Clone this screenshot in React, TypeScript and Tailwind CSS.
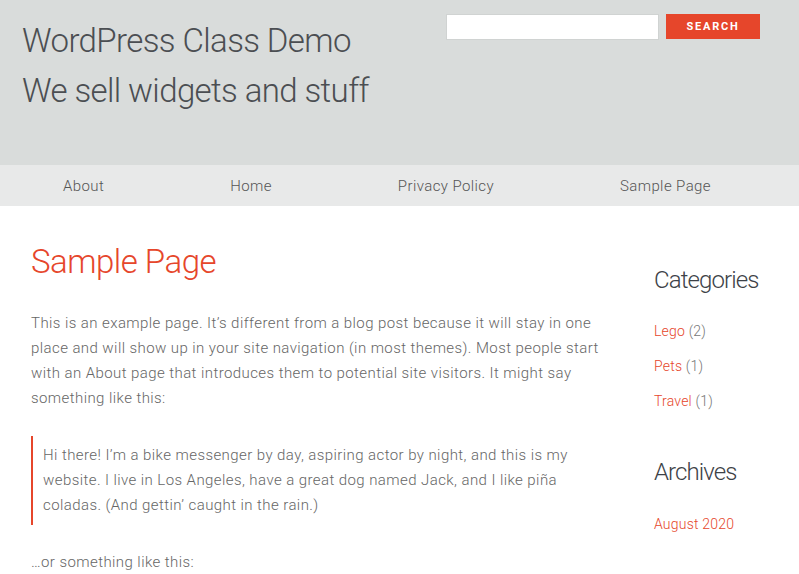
import React from "react";

const navItems = ["About", "Home", "Privacy Policy", "Sample Page"];

const categories = [
    { name: "Lego", count: 2 },
    { name: "Pets", count: 1 },
    { name: "Travel", count: 1 },
];

const App: React.FC = () => {
    return (
        <div className="min-h-[574px] bg-white font-['Roboto','Liberation_Sans',sans-serif] font-light text-[#666]">
            {/* site header */}
            <header className="flex h-[165px] justify-between bg-[#d9dcdb] pl-[22px] pr-[39px]">
                <div className="pt-[16px] text-[33px] leading-[50px] tracking-[-0.6px] text-[#4b4e52]">
                    <div>WordPress Class Demo</div>
                    <div>We sell widgets and stuff</div>
                </div>
                <form className="flex items-start gap-[7px] pt-[14px]" onSubmit={(e) => e.preventDefault()}>
                    <input type="text" className="h-[26px] w-[213px] border border-[#d0d3d2] bg-white px-2 text-sm outline-none" />
                    <button type="submit" className="h-[25px] w-[94px] bg-[#e6462b] pt-[2px] text-[11px] font-bold tracking-[1.8px] text-white">
                        SEARCH
                    </button>
                </form>
            </header>

            {/* primary navigation */}
            <nav className="flex h-[41px] items-center bg-[#e8e9e9] pt-[2px] text-[15px] tracking-[0.4px] text-[#555]">
                {navItems.map((item) => (
                    <a key={item} href="#" className="px-[63px]">
                        {item}
                    </a>
                ))}
            </nav>

            <div className="flex px-[31px]">
                <main className="w-[572px] pt-[34px]">
                    <h1 className="text-[33px] leading-[43px] tracking-[-0.5px] text-[#e6462b]">Sample Page</h1>
                    <p className="mt-[28px] text-[15px] leading-[25px] tracking-[0.42px]">
                        This is an example page. It’s different from a blog post because it will stay in one place and will show up in your site navigation (in most themes). Most people start with an About page that introduces them to potential site visitors. It might say something like this:
                    </p>
                    <blockquote className="mt-[25px] border-l-[2px] border-[#e6462b] py-[7px] pl-[10px] text-[15px] leading-[25px] tracking-[0.42px]">
                        Hi there! I’m a bike messenger by day, aspiring actor by night, and this is my website. I live in Los Angeles, have a great dog named Jack, and I like piña coladas. (And gettin’ caught in the rain.)
                    </blockquote>
                    <p className="mt-[25px] text-[15px] leading-[25px] tracking-[0.42px]">…or something like this:</p>
                </main>

                <aside className="ml-[51px] pt-[60px]">
                    <h2 className="text-[24px] leading-[29px] tracking-[-0.9px] text-[#3d4247]">Categories</h2>
                    <ul className="mt-[19px] text-[14px] leading-[35px] tracking-[0.2px]">
                        {categories.map((c) => (
                            <li key={c.name}>
                                <a href="#" className="text-[#e6462b]">{c.name}</a>{" "}
                                <span className="text-[#777]">({c.count})</span>
                            </li>
                        ))}
                    </ul>
                    <h2 className="mt-[39px] text-[24px] leading-[29px] tracking-[-0.9px] text-[#3d4247]">Archives</h2>
                    <ul className="mt-[20px] text-[14px] leading-[35px] tracking-[0.2px]">
                        <li>
                            <a href="#" className="text-[#e6462b]">August 2020</a>
                        </li>
                    </ul>
                </aside>
            </div>
        </div>
    );
};

export default App;
